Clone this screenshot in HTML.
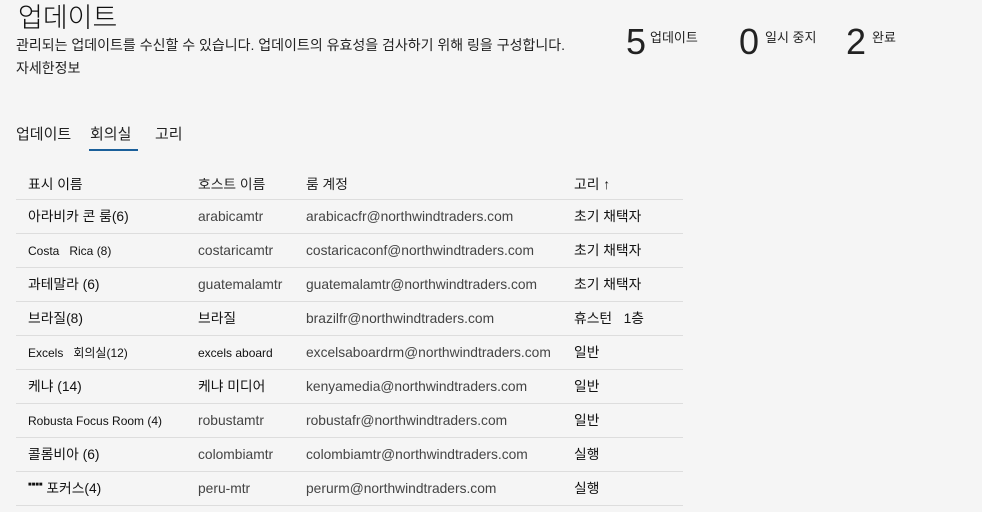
<!DOCTYPE html>
<html><head><meta charset="utf-8"><style>
body{margin:0;width:982px;height:512px;overflow:hidden;background:#f5f5f5;font-family:"Liberation Sans","Noto Sans CJK KR",sans-serif;color:#222;position:relative}
.a{position:absolute;white-space:nowrap;line-height:1.2}
.row{position:absolute;left:16px;width:667px;height:33px;border-bottom:1px solid #ddd}
.row span{position:absolute;top:9px;font-size:13.8px;line-height:16px;white-space:nowrap}
.c1{left:12px;color:#111}.c2{left:182px;color:#444}.c3{left:290px;color:#444}.c4{left:558px;color:#111}
</style></head><body>
<div class="a" style="left:18px;top:2px;font-size:27px;font-weight:300;color:#111">업데이트</div>
<div class="a" style="left:16px;top:37px;font-size:14px">관리되는 업데이트를 수신할 수 있습니다. 업데이트의 유효성을 검사하기 위해 링을 구성합니다.</div>
<div class="a" style="left:16px;top:60px;font-size:14px">자세한정보</div>
<div class="a" style="left:626px;top:20px;font-size:36px;color:#222">5</div><div class="a" style="left:650px;top:30px;font-size:13px">업데이트</div>
<div class="a" style="left:739px;top:20px;font-size:36px;color:#222">0</div><div class="a" style="left:765px;top:30px;font-size:13px">일시 중지</div>
<div class="a" style="left:846px;top:20px;font-size:36px;color:#222">2</div><div class="a" style="left:872px;top:30px;font-size:13px">완료</div>
<div class="a" style="left:16px;top:126px;font-size:15px">업데이트</div>
<div class="a" style="left:90px;top:126px;font-size:15px">회의실</div>
<div style="position:absolute;left:89px;top:149px;width:49px;height:2px;background:#1a5f9a"></div>
<div class="a" style="left:155px;top:126px;font-size:15px">고리</div>
<div class="row" style="top:166px"><span class="c1" style="top:11px">표시 이름</span><span class="c2" style="top:11px;color:#222">호스트 이름</span><span class="c3" style="top:11px;color:#222">룸 계정</span><span class="c4" style="top:11px">고리 ↑</span></div>
<div class="row" style="top:200px"><span class="c1">아라비카 콘 룸(6)</span><span class="c2">arabicamtr</span><span class="c3">arabicacfr@northwindtraders.com</span><span class="c4">초기 채택자</span></div>
<div class="row" style="top:234px"><span class="c1" style="font-size:12px">Costa &nbsp; Rica (8)</span><span class="c2">costaricamtr</span><span class="c3">costaricaconf@northwindtraders.com</span><span class="c4">초기 채택자</span></div>
<div class="row" style="top:268px"><span class="c1">과테말라 (6)</span><span class="c2">guatemalamtr</span><span class="c3">guatemalamtr@northwindtraders.com</span><span class="c4">초기 채택자</span></div>
<div class="row" style="top:302px"><span class="c1">브라질(8)</span><span class="c2" style="color:#111">브라질</span><span class="c3">brazilfr@northwindtraders.com</span><span class="c4">휴스턴 &nbsp; 1층</span></div>
<div class="row" style="top:336px"><span class="c1" style="font-size:12px">Excels &nbsp; 회의실(12)</span><span class="c2" style="font-size:12px;color:#111">excels aboard</span><span class="c3">excelsaboardrm@northwindtraders.com</span><span class="c4">일반</span></div>
<div class="row" style="top:370px"><span class="c1">케냐 (14)</span><span class="c2" style="color:#111">케냐 미디어</span><span class="c3">kenyamedia@northwindtraders.com</span><span class="c4">일반</span></div>
<div class="row" style="top:404px"><span class="c1" style="font-size:12px">Robusta Focus Room (4)</span><span class="c2">robustamtr</span><span class="c3">robustafr@northwindtraders.com</span><span class="c4">일반</span></div>
<div class="row" style="top:438px"><span class="c1">콜롬비아 (6)</span><span class="c2">colombiamtr</span><span class="c3">colombiamtr@northwindtraders.com</span><span class="c4">실행</span></div>
<div class="row" style="top:472px"><span class="c1"><span style="position:static;font-size:6px;vertical-align:top;line-height:8px">■■■■</span> 포커스(4)</span><span class="c2">peru-mtr</span><span class="c3">perurm@northwindtraders.com</span><span class="c4">실행</span></div>
</body></html>
